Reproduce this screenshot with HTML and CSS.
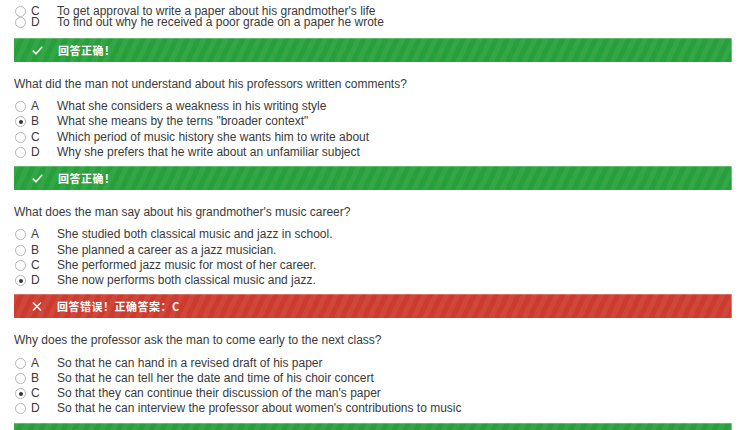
FILE: index.html
```html
<!DOCTYPE html>
<html lang="zh">
<head>
<meta charset="utf-8">
<title>Quiz</title>
<link rel="stylesheet" href="styles.css">
</head>
<body>
<div class="page">

  <section class="block first">
    <ul class="options tight">
      <li><span class="radio"></span><span class="letter">C</span><span class="text">To get approval to write a paper about his grandmother's life</span></li>
      <li><span class="radio"></span><span class="letter">D</span><span class="text">To find out why he received a poor grade on a paper he wrote</span></li>
    </ul>
    <div class="result ok">
      <svg class="icon" width="11" height="9" viewBox="0 0 11 9"><path d="M0.8 4.6 L4 7.8 L10.2 0.8" fill="none" stroke="#fff" stroke-width="1.5"/></svg>
      <span class="msg">回答正确！</span>
    </div>
  </section>

  <section class="block">
    <p class="question">What did the man not understand about his professors written comments?</p>
    <ul class="options">
      <li><span class="radio"></span><span class="letter">A</span><span class="text">What she considers a weakness in his writing style</span></li>
      <li><span class="radio checked"></span><span class="letter">B</span><span class="text">What she means by the terns "broader context"</span></li>
      <li><span class="radio"></span><span class="letter">C</span><span class="text">Which period of music history she wants him to write about</span></li>
      <li><span class="radio"></span><span class="letter">D</span><span class="text">Why she prefers that he write about an unfamiliar subject</span></li>
    </ul>
    <div class="result ok">
      <svg class="icon" width="11" height="9" viewBox="0 0 11 9"><path d="M0.8 4.6 L4 7.8 L10.2 0.8" fill="none" stroke="#fff" stroke-width="1.5"/></svg>
      <span class="msg">回答正确！</span>
    </div>
  </section>

  <section class="block">
    <p class="question">What does the man say about his grandmother's music career?</p>
    <ul class="options">
      <li><span class="radio"></span><span class="letter">A</span><span class="text">She studied both classical music and jazz in school.</span></li>
      <li><span class="radio"></span><span class="letter">B</span><span class="text">She planned a career as a jazz musician.</span></li>
      <li><span class="radio"></span><span class="letter">C</span><span class="text">She performed jazz music for most of her career.</span></li>
      <li><span class="radio checked"></span><span class="letter">D</span><span class="text">She now performs both classical music and jazz.</span></li>
    </ul>
    <div class="result bad">
      <svg class="icon" width="10" height="9" viewBox="0 0 10 9"><path d="M1 0.5 L9 8.5 M9 0.5 L1 8.5" fill="none" stroke="#fff" stroke-width="1.4"/></svg>
      <span class="msg">回答错误！正确答案：C</span>
    </div>
  </section>

  <section class="block">
    <p class="question">Why does the professor ask the man to come early to the next class?</p>
    <ul class="options">
      <li><span class="radio"></span><span class="letter">A</span><span class="text">So that he can hand in a revised draft of his paper</span></li>
      <li><span class="radio"></span><span class="letter">B</span><span class="text">So that he can tell her the date and time of his choir concert</span></li>
      <li><span class="radio checked"></span><span class="letter">C</span><span class="text">So that they can continue their discussion of the man's paper</span></li>
      <li><span class="radio"></span><span class="letter">D</span><span class="text">So that he can interview the professor about women's contributions to music</span></li>
    </ul>
    <div class="result ok">
      <svg class="icon" width="11" height="9" viewBox="0 0 11 9"><path d="M0.8 4.6 L4 7.8 L10.2 0.8" fill="none" stroke="#fff" stroke-width="1.5"/></svg>
      <span class="msg">回答正确！</span>
    </div>
  </section>

</div>
</body>
</html>
```

FILE: styles.css
```css
html, body {
  margin: 0;
  padding: 0;
  background: #fff;
}

body {
  font-family: "Liberation Sans", Arial, "Noto Sans CJK SC", sans-serif;
  font-size: 12px;
  color: #3a3a3a;
  overflow: hidden;
}

.page {
  width: 718px;
  padding: 0 0 0 14px;
}

.block.first {
  padding-top: 6px;
}

.question {
  margin: 0 0 7px;
  line-height: 16px;
  font-size: 12px;
}

.options {
  list-style: none;
  margin: 0 0 6px;
  padding: 0;
}

.options li {
  display: flex;
  align-items: center;
  height: 15.3px;
  line-height: 15px;
}

.options.tight {
  margin-bottom: 10px;
}

.options.tight li {
  height: 11px;
  line-height: 11px;
}

.radio {
  box-sizing: border-box;
  flex: none;
  width: 11px;
  height: 11px;
  border: 1px solid #b4b4b4;
  border-radius: 50%;
  background: #fff;
  position: relative;
  margin: 0 5px 0 1px;
}

.radio.checked::after {
  content: "";
  position: absolute;
  left: 2.5px;
  top: 2.5px;
  width: 4px;
  height: 4px;
  border-radius: 50%;
  background: #333;
}

.letter {
  flex: none;
  width: 26px;
}

.text {
  white-space: nowrap;
}

.result {
  box-sizing: border-box;
  display: flex;
  align-items: center;
  height: 24px;
  margin: 0 0 14px;
  padding-left: 18px;
  color: #fff;
  font-family: "Noto Sans CJK SC", "Liberation Sans", sans-serif;
  font-weight: bold;
  font-size: 11px;
  box-shadow: inset 0 1px 0 rgba(255, 255, 255, 0.25), inset -1px 0 0 rgba(255, 255, 255, 0.3);
}

.result.ok {
  background-color: #27a03b;
  background-image: repeating-linear-gradient(115deg, rgba(255, 255, 255, 0.06) 0 5px, transparent 5px 10px);
}

.result.bad {
  background-color: #cc3b2e;
  background-image: repeating-linear-gradient(115deg, rgba(255, 255, 255, 0.06) 0 5px, transparent 5px 10px);
}

.icon {
  flex: none;
  margin-right: 15px;
}

.msg {
  letter-spacing: 0.5px;
}
```
